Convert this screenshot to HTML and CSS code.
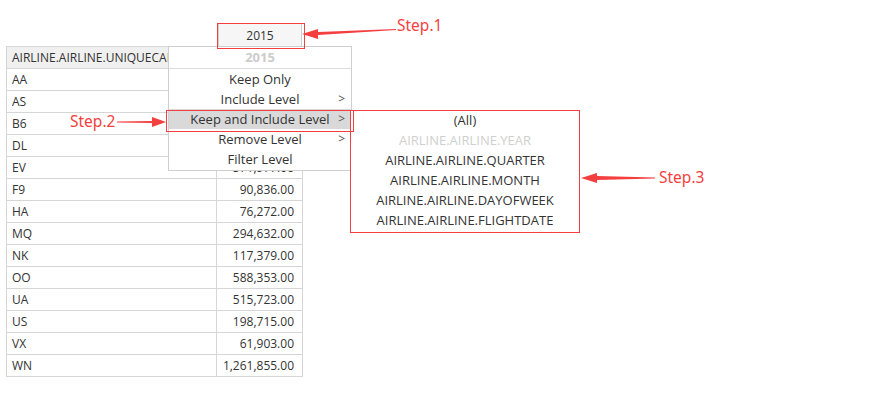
FILE: index.html
```html
<!DOCTYPE html>
<html>
<head>
<meta charset="utf-8">
<link rel="stylesheet" href="styles.css">
</head>
<body>
<div class="page">
  <div class="col-header-row">
    <div class="year-box">2015</div>
  </div>
  <table class="grid">
    <colgroup><col class="c1"><col class="c2"></colgroup>
    <tr class="head"><td>AIRLINE.AIRLINE.UNIQUECARRIER</td><td></td></tr>
    <tr><td>AA</td><td class="num">942,455.00</td></tr>
    <tr><td>AS</td><td class="num">171,852.00</td></tr>
    <tr><td>B6</td><td class="num">267,048.00</td></tr>
    <tr><td>DL</td><td class="num">875,881.00</td></tr>
    <tr><td>EV</td><td class="num">571,977.00</td></tr>
    <tr><td>F9</td><td class="num">90,836.00</td></tr>
    <tr><td>HA</td><td class="num">76,272.00</td></tr>
    <tr><td>MQ</td><td class="num">294,632.00</td></tr>
    <tr><td>NK</td><td class="num">117,379.00</td></tr>
    <tr><td>OO</td><td class="num">588,353.00</td></tr>
    <tr><td>UA</td><td class="num">515,723.00</td></tr>
    <tr><td>US</td><td class="num">198,715.00</td></tr>
    <tr><td>VX</td><td class="num">61,903.00</td></tr>
    <tr><td>WN</td><td class="num">1,261,855.00</td></tr>
  </table>

  <div class="menu">
    <div class="menu-title">2015</div>
    <div class="menu-item">Keep Only</div>
    <div class="menu-item">Include Level<span class="chev">&gt;</span></div>
    <div class="menu-item active">Keep and Include Level<span class="chev">&gt;</span></div>
    <div class="menu-item">Remove Level<span class="chev">&gt;</span></div>
    <div class="menu-item">Filter Level</div>
  </div>

  <div class="submenu">
    <div class="sub-item">(All)</div>
    <div class="sub-item disabled">AIRLINE.AIRLINE.YEAR</div>
    <div class="sub-item">AIRLINE.AIRLINE.QUARTER</div>
    <div class="sub-item">AIRLINE.AIRLINE.MONTH</div>
    <div class="sub-item">AIRLINE.AIRLINE.DAYOFWEEK</div>
    <div class="sub-item">AIRLINE.AIRLINE.FLIGHTDATE</div>
  </div>

  <div class="mark mark-year"></div>
  <div class="mark mark-item"></div>

  <span class="step step1">Step.1</span>
  <span class="step step2">Step.2</span>
  <span class="step step3">Step.3</span>

  <svg class="arrows" width="895" height="402" viewBox="0 0 895 402">
    <polygon points="396,29 318,32 318,29 302,34 318,39 318,35 396,30" fill="#f43f3f"/>
    <polygon points="117,121.5 152,121 152,117 166,122 152,127 152,123 117,122.5" fill="#f43f3f"/>
    <polygon points="655,177.5 597,176 597,173 581,178 597,183 597,180 655,178.5" fill="#f43f3f"/>
  </svg>
</div>
</body>
</html>
```

FILE: styles.css
```css
* { box-sizing: border-box; }
html, body { margin: 0; padding: 0; background: #fff; }
body {
  font-family: "Open Sans", "Noto Sans", sans-serif;
  font-size: 12px;
  color: #333;
}
.page {
  position: relative;
  width: 895px;
  height: 402px;
  padding: 23px 0 0 6px;
}
.col-header-row {
  display: flex;
  height: 23px;
  padding-left: 212px;
}
.year-box {
  width: 84px;
  height: 23px;
  line-height: 23px;
  text-align: center;
  background: #f6f6f6;
  border: 1px solid #cfcfcf;
  border-bottom: none;
}
.grid {
  border-collapse: collapse;
  table-layout: fixed;
  width: 296px;
}
.grid col.c1 { width: 210px; }
.grid col.c2 { width: 86px; }
.grid td {
  border: 1px solid #d6d6d6;
  height: 22px;
  padding: 0 5px;
  white-space: nowrap;
  overflow: hidden;
  line-height: 19px;
}
.grid tr.head td { background: #f0f0f0; }
.grid td.num { text-align: right; padding-right: 8px; }

.menu {
  position: absolute;
  left: 168px;
  top: 46px;
  width: 184px;
  background: #fff;
  border: 1px solid #cfcfcf;
  padding-bottom: 1px;
}
.menu-title {
  height: 22px;
  line-height: 21px;
  text-align: center;
  font-weight: bold;
  font-size: 13px;
  color: #cccccc;
  border-bottom: 1px solid #dcdcdc;
}
.menu-item {
  position: relative;
  height: 20px;
  line-height: 21px;
  text-align: center;
  font-size: 13px;
}
.menu-item.active { background: #d9d9d9; }
.chev {
  position: absolute;
  right: 6px;
  top: -1px;
  color: #555;
  font-size: 12px;
}

.submenu {
  position: absolute;
  left: 350px;
  top: 110px;
  width: 230px;
  height: 123px;
  background: #fff;
  border: 1px solid #f43f3f;
}
.sub-item {
  height: 20px;
  line-height: 19px;
  text-align: center;
  font-size: 13px;
}
.sub-item.disabled { color: #cfcfcf; }

.mark {
  position: absolute;
  border: 1px solid #f43f3f;
}
.mark-year { left: 217px; top: 23px; width: 88px; height: 26px; }
.mark-item { left: 166px; top: 110px; width: 188px; height: 22px; }

.step {
  position: absolute;
  font-family: "Noto Sans", "Open Sans", sans-serif;
  font-size: 15.5px;
  color: #f43f3f;
  line-height: 20px;
}
.step1 { left: 397px; top: 15px; }
.step2 { left: 70px; top: 111px; }
.step3 { left: 659px; top: 167px; }

.arrows {
  position: absolute;
  left: 0;
  top: 0;
  pointer-events: none;
}
```
